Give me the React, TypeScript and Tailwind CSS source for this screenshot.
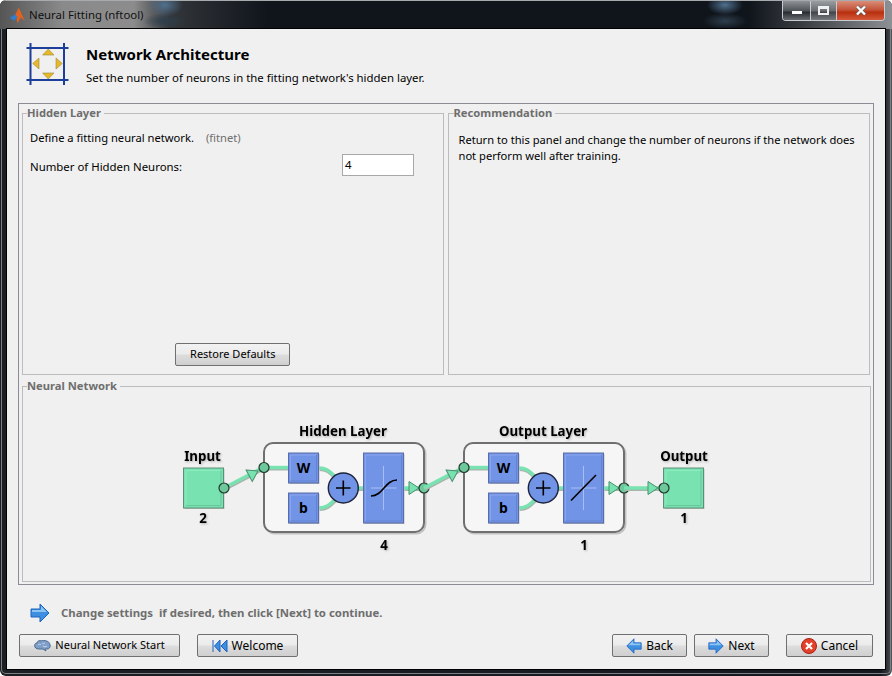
import type { ReactNode } from "react";

const font = "font-['Noto_Sans','Liberation_Sans',sans-serif]";

function Panel({ title, className, legend = "ml-[4px]", children }: { title: string; className: string; legend?: string; children?: ReactNode }) {
  return (
    <fieldset className={`border border-[#bcbcbc] ${className}`}>
      <legend className={`pr-[3px] text-[11.2px] leading-[14px] font-bold text-[#6e6e6e] ${legend}`}>{title}</legend>
      {children}
    </fieldset>
  );
}

function Btn({ icon, label, className, size = "text-[12px]" }: { icon: ReactNode; label: string; className: string; size?: string }) {
  return (
    <button className={`h-[23px] flex items-center justify-center gap-[4px] rounded-[2px] border border-[#707070] bg-[linear-gradient(#f2f2f2_0%,#ebebeb_48%,#dddddd_52%,#cfcfcf_100%)] text-black ${size} ${className}`}>
      {icon}
      {label}
    </button>
  );
}

function ArrowIcon({ left = false, w = 16 }: { left?: boolean; w?: number }) {
  return (
    <svg width={w} height={w} viewBox="0 0 20 20">
      <g transform={left ? "matrix(-1 0 0 1 20 0)" : undefined}>
        <path d="M1 6h9V1l9 9-9 9v-5H1z" fill="#3f8fe0" stroke="#1d62c0" strokeWidth="1" />
        <path d="M2 7h9V3l6 6H2z" fill="#8cc4f4" />
      </g>
    </svg>
  );
}

function Block({ x, y, w, h, label }: { x: number; y: number; w: number; h: number; label?: string }) {
  return (
    <g>
      <rect x={x + 1} y={y + 1} width={w} height={h} fill="#bdbdbd" />
      <rect x={x} y={y} width={w} height={h} fill="#7294e6" stroke="#5a6ca8" />
      <path d={`M${x + 2} ${y + h - 2}V${y + 2}H${x + w - 2}`} fill="none" stroke="#89a4ee" />
      <path d={`M${x + 2} ${y + h - 2}H${x + w - 2}V${y + 2}`} fill="none" stroke="#6582d2" />
      {label && (
        <text x={x + w / 2} y={y + h / 2 + 5} textAnchor="middle" fontSize="14" fontWeight="700" fill="#000">
          {label}
        </text>
      )}
    </g>
  );
}

function Node({ x, y }: { x: number; y: number }) {
  return <circle cx={x} cy={y} r="5" fill="#6fc79c" stroke="#1f3a2c" strokeWidth="1.2" />;
}

function Wire({ d }: { d: string }) {
  return (
    <g fill="none">
      <path d={d} stroke="#a9b4ad" strokeWidth="4" transform="translate(0.5 1)" />
      <path d={d} stroke="#78e2b0" strokeWidth="3.4" />
    </g>
  );
}

function Tri({ x, y, angle = 0 }: { x: number; y: number; angle?: number }) {
  return <path d="M-10 -6.5L0 0L-10 6.5Z" transform={`translate(${x} ${y}) rotate(${angle})`} fill="#78e2b0" stroke="#4a8f70" />;
}

function Label({ x, y, children }: { x: number; y: number; children: ReactNode }) {
  return (
    <text x={x} y={y} textAnchor="middle" fontSize="13.3" fontWeight="700" fill="#000" className="drop-shadow-[1px_1px_1px_#b0b0b0]">
      {children}
    </text>
  );
}

function IoBox({ x }: { x: number }) {
  return (
    <g>
      <rect x={x + 1} y="55" width="40" height="40" fill="#c0c0c0" />
      <rect x={x} y="54" width="40" height="40" fill="#78e2b0" stroke="#5d8f78" />
      <path d={`M${x + 2.5} 91.5V56.5H${x + 37.5}`} fill="none" stroke="#8cecbf" />
      <path d={`M${x + 2.5} 91.5H${x + 37.5}V56.5`} fill="none" stroke="#68c89c" />
    </g>
  );
}

function LayerBox({ ox, title, size, curve }: { ox: number; title: string; size: string; curve: ReactNode }) {
  return (
    <g transform={`translate(${ox} 0)`}>
      <Label x={80} y={22}>{title}</Label>
      <rect x="2.5" y="30.5" width="160" height="89" rx="9" fill="none" stroke="#c2c2c2" strokeWidth="2" />
      <rect x="1" y="29" width="160" height="89" rx="9" fill="#f6f6f6" stroke="#6f6f6f" strokeWidth="2" />
      <Wire d="M1 53.5H26" />
      <Wire d="M56 54C66 54 68 60 76 66" />
      <Wire d="M56 94C66 94 68 88 76 82" />
      <Wire d="M94 74H102" />
      <Block x={25.5} y={39} w={30} h={30} label="W" />
      <Block x={25.5} y={79} w={30} h={30} label="b" />
      <circle cx="80.3" cy="74" r="15" fill="#7294e6" stroke="#1d2238" strokeWidth="1.4" />
      <path d="M73 74H87.5M80.3 66.5V81.5" stroke="#000" strokeWidth="1.6" />
      <Block x={100.5} y={39} w={40} h={70} />
      <path d="M120.5 52V96M108 74H133.5" stroke="#a8bdf4" />
      {curve}
      <Wire d="M141 74H161" />
      <Tri x={156} y={74} />
      <Node x={161} y={74} />
      <Node x={1} y={53.5} />
      <Label x={121} y={136}>{size}</Label>
    </g>
  );
}

function Diagram() {
  return (
    <svg width="540" height="140" viewBox="0 0 540 140" className="font-['Noto_Sans',sans-serif]">
      <Label x={20.5} y={47}>Input</Label>
      <IoBox x={1.5} />
      <Label x={21} y={108.5}>2</Label>
      <Wire d="M42 74L82 53" />
      <Tri x={76} y={57} angle={-28} />
      <Node x={42} y={74} />
      <LayerBox ox={81} title="Hidden Layer" size="4" curve={<path d="M108 82C120 82 122 66 134 66" fill="none" stroke="#000" strokeWidth="1.6" />} />
      <Wire d="M242 74L282 53" />
      <Tri x={276} y={57} angle={-28} />
      <LayerBox ox={281} title="Output Layer" size="1" curve={<path d="M108 86.5L133 61" fill="none" stroke="#000" strokeWidth="1.6" />} />
      <Wire d="M442 74H482" />
      <Tri x={476} y={74} />
      <IoBox x={481.5} />
      <Node x={482} y={74} />
      <Label x={502} y={47}>Output</Label>
      <Label x={502} y={108.5}>1</Label>
    </svg>
  );
}

function HeaderIcon() {
  return (
    <svg width="44" height="44" viewBox="0 0 44 44">
      <path d="M0.5 5H42.5M0.5 37H42.5M4.5 0V42M38 0V42" stroke="#1c3f9c" strokeWidth="2" />
      <path d="M22.3 6L28 12H16.600Z M22.3 36L28 30H16.600Z M6.700 20.500L13 15V26Z M36.300 20.500L30 15V26Z" fill="#e6b82c" stroke="#9c8a3a" strokeWidth="0.6" />
    </svg>
  );
}

export default function App() {
  return (
    <div className={`w-[892px] h-[676px] flex flex-col rounded-[6px] overflow-hidden bg-[linear-gradient(90deg,#1c1f24_0px,#1c1f24_6px,#14181e_880px,#33363a_888px,#55585c_892px)] ${font}`}>
      <div className="h-[29px] flex items-center border-t border-[#a8abae] bg-[radial-gradient(ellipse_18px_12px_at_165px_4px,#50708e,transparent),radial-gradient(ellipse_22px_8px_at_165px_20px,#2e3e4c,transparent),radial-gradient(ellipse_18px_10px_at_725px_4px,#50708e,transparent),radial-gradient(ellipse_22px_8px_at_725px_20px,#2e3e4c,transparent),linear-gradient(90deg,#555_0%,#8a8a8a_7%,#8c8c8c_15%,#33363a_19%,#10151c_30%,#10151c_84%,#3a3e43_90%,#8d9094_100%)]">
        <svg width="17" height="17" viewBox="0 0 16 16" className="ml-[9px]">
          <path d="M6 7l3-6c2 2 3 7 6 12-2-1-3-3-4-3-1 2-2 3-3 5-1-3-1-6-2-8z" fill="#e2621e" />
          <path d="M0.500 10l5.500-3 2 2.500-3 3.500z" fill="#2f7fd0" />
        </svg>
        <span className="ml-[3px] text-[11.4px] text-[#111]">Neural Fitting (nftool)</span>
        <div className="ml-auto mr-[7px] mb-[8px] flex h-[20px] rounded-b-[4px] border border-t-0 border-[#c8ccd0] overflow-hidden">
          <div className="w-[28px] flex items-center justify-center border-r border-[#c8ccd0] bg-[linear-gradient(#8e9296,#50555a_50%,#2a2e32_60%,#6a6e72)]">
            <div className="w-[10px] h-[3px] bg-white mt-[4px]" />
          </div>
          <div className="w-[26px] flex items-center justify-center border-r border-[#c8ccd0] bg-[linear-gradient(#9a9ea2,#6a6e72_50%,#43474b_60%,#777b7f)]">
            <div className="w-[11px] h-[9px] border-2 border-t-[3px] border-[#eef0f2]" />
          </div>
          <div className="w-[47px] flex items-center justify-center bg-[linear-gradient(#d98e7a,#c4543a_45%,#b8300f_60%,#d4593a)]">
            <svg width="12" height="11" viewBox="0 0 12 11">
              <path d="M2 1.500l8 8M10 1.500l-8 8" stroke="#5a5a5a" strokeWidth="3.600" />
              <path d="M2 1.500l8 8M10 1.500l-8 8" stroke="#fff" strokeWidth="2.400" />
            </svg>
          </div>
        </div>
      </div>

      <div className="mx-[1px] h-[645px] px-[5px] border-x border-b border-[#7c7f83] rounded-b-[5px]">
        <div className="h-[640px] flex flex-col bg-[#f0f0f0] outline outline-black">
          <div className="h-[74px] flex items-start pl-[19px] pt-[14px]">
            <HeaderIcon />
            <div className="ml-[16px]">
              <div className="mt-[1px] text-[15px] leading-[20px] font-bold text-black">Network Architecture</div>
              <div className="mt-[6px] text-[11.4px] leading-[16px] text-black">Set the number of neurons in the fitting network's hidden layer.</div>
            </div>
          </div>

          <div className="mx-[11px] h-[482px] border border-[#8c8c96] px-[3px] pt-[2px]">
            <div className="flex gap-[4px]">
              <Panel title="Hidden Layer" className="w-[422px] h-[269px]">
                <div className="px-[7px]">
                  <div className="flex gap-[12px] text-[11.2px] leading-[16px] mt-[10px]">
                    <span className="text-black">Define a fitting neural network.</span>
                    <span className="text-[#6e6e6e]">(fitnet)</span>
                  </div>
                  <div className="flex items-center mt-[8px] text-[11.4px]">
                    <span className="w-[312px] mt-[4px] text-black">Number of Hidden Neurons:</span>
                    <div className="w-[72px] h-[22px] border border-[#a8a8a8] bg-white pl-[2px] leading-[20px] text-black">4</div>
                  </div>
                  <div className="flex justify-center mt-[167px]">
                    <Btn icon={null} label="Restore Defaults" className="w-[115px]" size="text-[11px]" />
                  </div>
                </div>
              </Panel>
              <Panel title="Recommendation" className="w-[423px] h-[269px]" legend="ml-[5px]">
                <p className="mt-[12px] pl-[10px] pr-[2px] text-[11.15px] leading-[16px] text-black">
                  Return to this panel and change the number of neurons if the network does not perform well after training.
                </p>
              </Panel>
            </div>
            <Panel title="Neural Network" className="mt-[4px] w-[849px] h-[203px]">
              <div className="flex justify-center mt-[21px] pl-[10px]">
                <Diagram />
              </div>
            </Panel>
          </div>

          <div className="h-[49px] flex items-center pt-[6px] pl-[23px] gap-[11px]">
            <ArrowIcon w={20} />
            <span className="whitespace-pre text-[11.4px] font-bold text-[#6e6e6e]">Change settings  if desired, then click [Next] to continue.</span>
          </div>

          <div className="flex items-center px-[12px]">
            <Btn
              className="w-[161px]"
              label="Neural Network Start"
              size="text-[11px]"
              icon={
                <svg width="17" height="12" viewBox="0 0 17 12">
                  <path d="M1 7C0 5 1 3 3 3c0-2 3-3 4-2 2-1 4-1 5 0 2 0 4 2 4 4 1 2-1 4-3 4-1 0-2 0-2 0l1 2-3-2H6C4 9 2 9 1 7z" fill="#7f9fc8" stroke="#4a6a92" />
                  <path d="M4 5c1-1 2-1 3 0M8 3c1 1 2 1 3 0M9 6c1 1 3 1 4 0" fill="none" stroke="#c4d6ec" />
                </svg>
              }
            />
            <Btn
              className="ml-[17px] w-[101px]"
              label="Welcome"
              icon={
                <svg width="16" height="12" viewBox="0 0 16 12">
                  <path d="M1 0v12M8 0L2.500 6 8 12zM15 0L9 6l6 6z" fill="#3f8fe0" stroke="#1d62c0" />
                </svg>
              }
            />
            <Btn className="ml-auto w-[75px]" label="Back" icon={<ArrowIcon left />} />
            <Btn className="ml-[7px] w-[75px]" label="Next" icon={<ArrowIcon />} />
            <Btn
              className="ml-[17px] w-[87px]"
              label="Cancel"
              icon={
                <svg width="16" height="16" viewBox="0 0 16 16">
                  <circle cx="8" cy="8" r="7.500" fill="#e2402a" stroke="#a82415" />
                  <path d="M5 5l6 6M11 5l-6 6" stroke="#fff" strokeWidth="2.200" />
                </svg>
              }
            />
          </div>
        </div>
      </div>
    </div>
  );
}
